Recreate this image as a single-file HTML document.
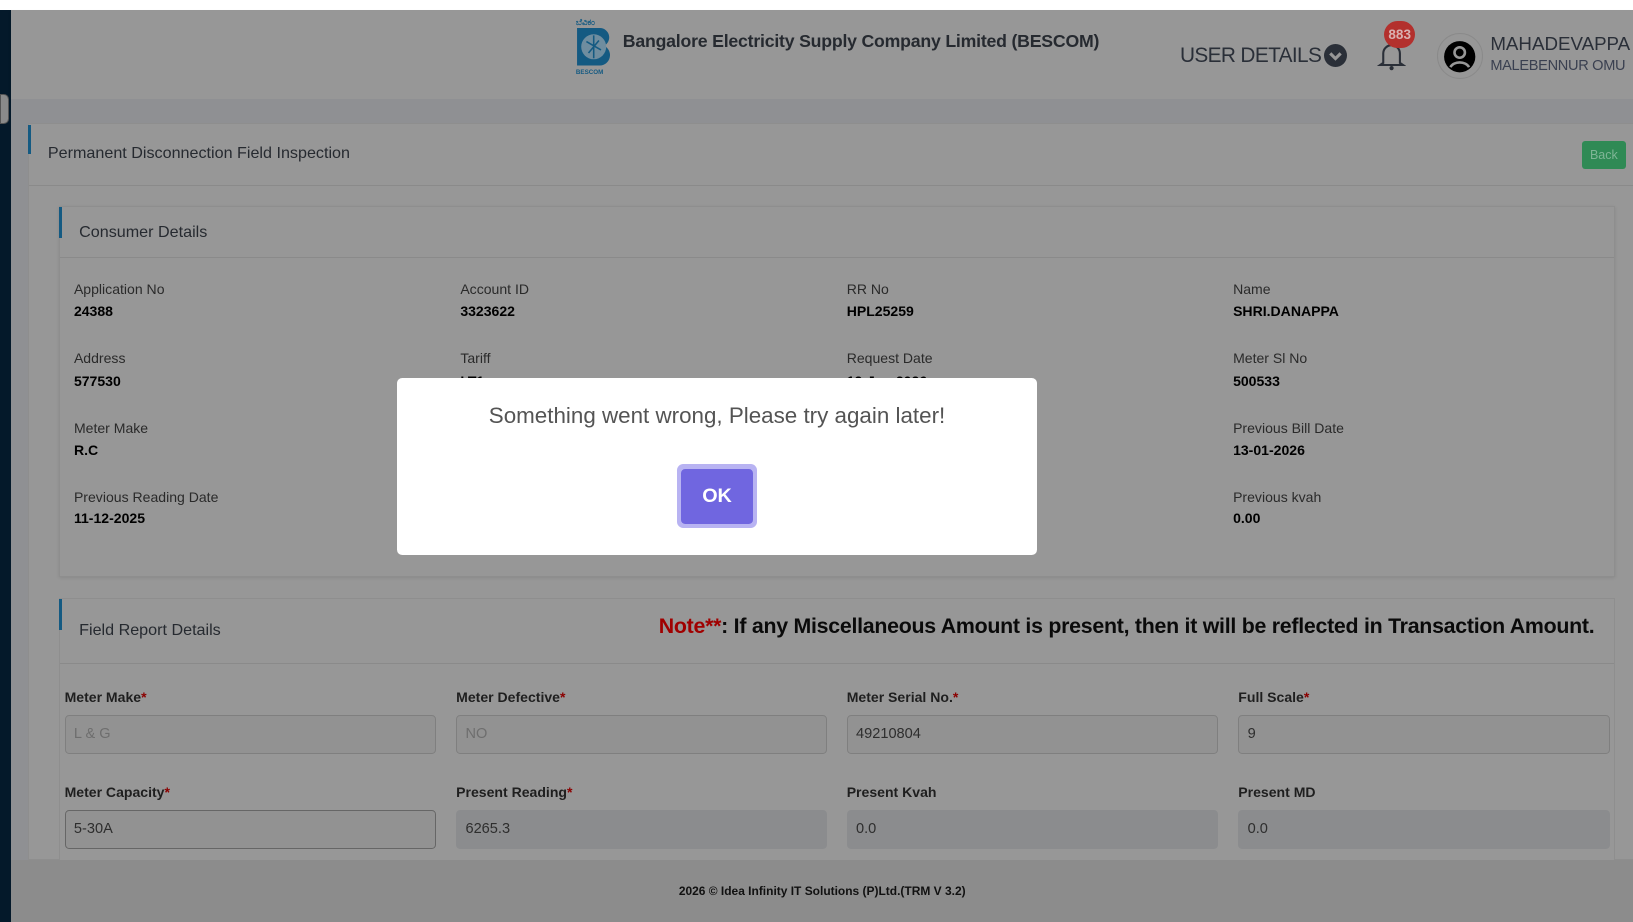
<!DOCTYPE html>
<html><head><meta charset="utf-8"><style>
html{zoom:1.04145}
*{box-sizing:border-box;margin:0;padding:0}
body{width:1568px;height:885px;overflow:hidden;position:relative;background:#fff;font-family:"Liberation Sans",sans-serif;color:#1e1e1e}
.a{position:absolute}
.side{left:0;top:10px;width:11px;height:875px;background:#04192a}
.tab{left:0;top:90px;width:9px;height:29px;background:#8a8a8a;border-radius:0 5px 5px 0;border:1px solid #555}
.hdr{left:11px;top:10px;width:1557px;height:85px;background:#979797;box-shadow:0 2px 3px rgba(0,0,0,.12)}
.bg{left:11px;top:95px;width:1557px;height:731px;background:#8f9093}
.card{background:#979797;border:1px solid #8e8e8e}
.acc{width:3px;background:#145a82}
.line{height:1px;background:#8a8a8a}
.lbl{font-size:13.5px;color:#2a2a2a}
.val{font-size:13.5px;font-weight:bold;color:#000}
.fl{font-size:13.5px;font-weight:bold;color:#1f1f1f}
.fl b{color:#8b0000}
.in{height:37px;border:1px solid #7f7f7f;border-radius:4px;background:#929292;font-size:14px;color:#2e2e2e;padding:9px 8px}
.dis{background:#8b8c8e;border-color:#8b8c8e}
.foot{left:11px;top:826px;width:1557px;height:59px;background:#8c8c8c;font-size:11.5px;font-weight:bold;text-align:center;padding-top:23px;color:#111}
</style></head><body>
<div class="a side"></div>
<div class="a hdr"></div>
<div class="a bg"></div>
<div class="a tab"></div>
<div class="a" style="left:553px;top:17px;width:40px;height:56px">
<div style="font-size:8px;color:#145a82;line-height:9px;font-weight:bold">ಬೆವಿಕಂ</div>
<svg width="40" height="38" viewBox="0 0 40 38"><path d="M1 1h22a9 9 0 0 1 4 17a10 10 0 0 1-4 19H1z" fill="#145a82"/><circle cx="17" cy="19" r="12" fill="#6f8d9f"/><path d="M17 8v22M10 14l14 8M12 25l10-12" stroke="#145a82" stroke-width="1.5"/></svg>
<div style="font-size:6px;font-weight:bold;color:#145a82;margin-top:-3px">BESCOM</div>
</div>
<div class="a" style="left:598px;top:30px;font-size:17px;font-weight:bold;color:#262a30;letter-spacing:-0.2px">Bangalore Electricity Supply Company Limited (BESCOM)</div>
<div class="a" style="left:1133px;top:42px;font-size:20px;color:#2a2f38;letter-spacing:-0.6px">USER DETAILS</div>
<div class="a" style="left:1271px;top:42px;width:22px;height:22px;border-radius:50%;background:#2a2f38"><svg width="22" height="22"><path d="M6 9l5 5 5-5" stroke="#979797" stroke-width="3" fill="none"/></svg></div>
<svg class="a" style="left:1322px;top:38px" width="28" height="30" viewBox="0 0 28 30"><path d="M6 22V13a8 8 0 0 1 16 0v9l3 2H3z" fill="none" stroke="#2a2f38" stroke-width="2"/><circle cx="14" cy="27" r="2" fill="#2a2f38"/></svg>
<div class="a" style="left:1329px;top:20px;width:30px;height:26px;border-radius:13px;background:#b3302d;color:#d9b0b0;font-size:13px;font-weight:bold;text-align:center;line-height:26px">883</div>
<div class="a" style="left:1380px;top:32px;width:44px;height:44px;border-radius:50%;border:1px solid #8a8a8a"></div>
<svg class="a" style="left:1385px;top:37px" width="34" height="34" viewBox="0 0 34 34"><circle cx="17" cy="17" r="15" fill="#000"/><circle cx="17" cy="13" r="5" fill="none" stroke="#979797" stroke-width="2.5"/><path d="M8 27a10 8 0 0 1 18 0" fill="none" stroke="#979797" stroke-width="2.5"/></svg>
<div class="a" style="left:1431px;top:32px;font-size:18px;color:#2a2f38;white-space:nowrap">MAHADEVAPPA B</div>
<div class="a" style="left:1431px;top:56px;font-size:14px;color:#3a4050;letter-spacing:-0.3px">MALEBENNUR OMU</div>

<div class="a card" style="left:27px;top:118px;width:1545px;height:708px;border-right:none"></div>
<div class="a acc" style="left:27px;top:120px;height:28px"></div>
<div class="a" style="left:46px;top:138px;font-size:15.5px;color:#262a30">Permanent Disconnection Field Inspection</div>
<div class="a line" style="left:28px;top:178px;width:1540px"></div>
<div class="a" style="left:1519px;top:135px;width:42px;height:27px;background:#2f8a55;border-radius:3px;color:#7fb596;font-size:12px;text-align:center;line-height:27px">Back</div>

<div class="a card" style="left:57px;top:198px;width:1494px;height:356px;box-shadow:0 1px 3px rgba(0,0,0,.1)"></div>
<div class="a acc" style="left:57px;top:199px;height:30px"></div>
<div class="a" style="left:76px;top:214px;font-size:15.5px;color:#262a30">Consumer Details</div>
<div class="a line" style="left:58px;top:247px;width:1492px"></div>

<div class="a lbl" style="left:71px;top:270px">Application No</div><div class="a val" style="left:71px;top:291px">24388</div>
<div class="a lbl" style="left:442px;top:270px">Account ID</div><div class="a val" style="left:442px;top:291px">3323622</div>
<div class="a lbl" style="left:813px;top:270px">RR No</div><div class="a val" style="left:813px;top:291px">HPL25259</div>
<div class="a lbl" style="left:1184px;top:270px">Name</div><div class="a val" style="left:1184px;top:291px">SHRI.DANAPPA</div>
<div class="a lbl" style="left:71px;top:336px">Address</div><div class="a val" style="left:71px;top:358px">577530</div>
<div class="a lbl" style="left:442px;top:336px">Tariff</div><div class="a val" style="left:442px;top:358px">LT1</div>
<div class="a lbl" style="left:813px;top:336px">Request Date</div><div class="a val" style="left:813px;top:358px">12-Jan-2026</div>
<div class="a lbl" style="left:1184px;top:336px">Meter Sl No</div><div class="a val" style="left:1184px;top:358px">500533</div>
<div class="a lbl" style="left:71px;top:403px">Meter Make</div><div class="a val" style="left:71px;top:424px">R.C</div>
<div class="a lbl" style="left:1184px;top:403px">Previous Bill Date</div><div class="a val" style="left:1184px;top:424px">13-01-2026</div>
<div class="a lbl" style="left:71px;top:470px">Previous Reading Date</div><div class="a val" style="left:71px;top:490px">11-12-2025</div>
<div class="a lbl" style="left:1184px;top:470px">Previous kvah</div><div class="a val" style="left:1184px;top:490px">0.00</div>

<div class="a card" style="left:57px;top:574px;width:1494px;height:260px"></div>
<div class="a acc" style="left:57px;top:575px;height:30px"></div>
<div class="a" style="left:76px;top:596px;font-size:15.5px;color:#262a30">Field Report Details</div>
<div class="a" style="right:37px;top:590px;font-size:20.5px;font-weight:bold;color:#0a0a0a;letter-spacing:-0.25px;white-space:nowrap"><span style="color:#a00000">Note**</span>: If any Miscellaneous Amount is present, then it will be reflected in Transaction Amount.</div>
<div class="a line" style="left:58px;top:637px;width:1492px"></div>

<div class="a fl" style="left:62px;top:662px">Meter Make<b>*</b></div>
<div class="a fl" style="left:438px;top:662px">Meter Defective<b>*</b></div>
<div class="a fl" style="left:813px;top:662px">Meter Serial No.<b>*</b></div>
<div class="a fl" style="left:1189px;top:662px">Full Scale<b>*</b></div>
<div class="a in" style="left:62px;top:687px;width:357px;color:#6e6e6e">L &amp; G</div>
<div class="a in" style="left:438px;top:687px;width:356px;color:#6e6e6e">NO</div>
<div class="a in" style="left:813px;top:687px;width:357px">49210804</div>
<div class="a in" style="left:1189px;top:687px;width:357px">9</div>

<div class="a fl" style="left:62px;top:753px">Meter Capacity<b>*</b></div>
<div class="a fl" style="left:438px;top:753px">Present Reading<b>*</b></div>
<div class="a fl" style="left:813px;top:753px">Present Kvah</div>
<div class="a fl" style="left:1189px;top:753px">Present MD</div>
<div class="a in" style="left:62px;top:778px;width:357px;border-color:#666">5-30A</div>
<div class="a in dis" style="left:438px;top:778px;width:356px">6265.3</div>
<div class="a in dis" style="left:813px;top:778px;width:357px">0.0</div>
<div class="a in dis" style="left:1189px;top:778px;width:357px">0.0</div>

<div class="a foot">2026 © Idea Infinity IT Solutions (P)Ltd.(TRM V 3.2)</div>

<div class="a" style="left:381px;top:363px;width:615px;height:170px;background:#fff;border-radius:5px"></div>
<div class="a" style="left:381px;top:387px;width:615px;text-align:center;font-size:21.5px;color:#545454">Something went wrong, Please try again later!</div>
<div class="a" style="left:650px;top:446px;width:77px;height:61px;border-radius:6px;background:#b8b3f2"></div>
<div class="a" style="left:654px;top:450px;width:69px;height:53px;border-radius:4px;background:#7066e0;color:#fff;font-size:19px;font-weight:bold;text-align:center;line-height:53px">OK</div>
</body></html>
